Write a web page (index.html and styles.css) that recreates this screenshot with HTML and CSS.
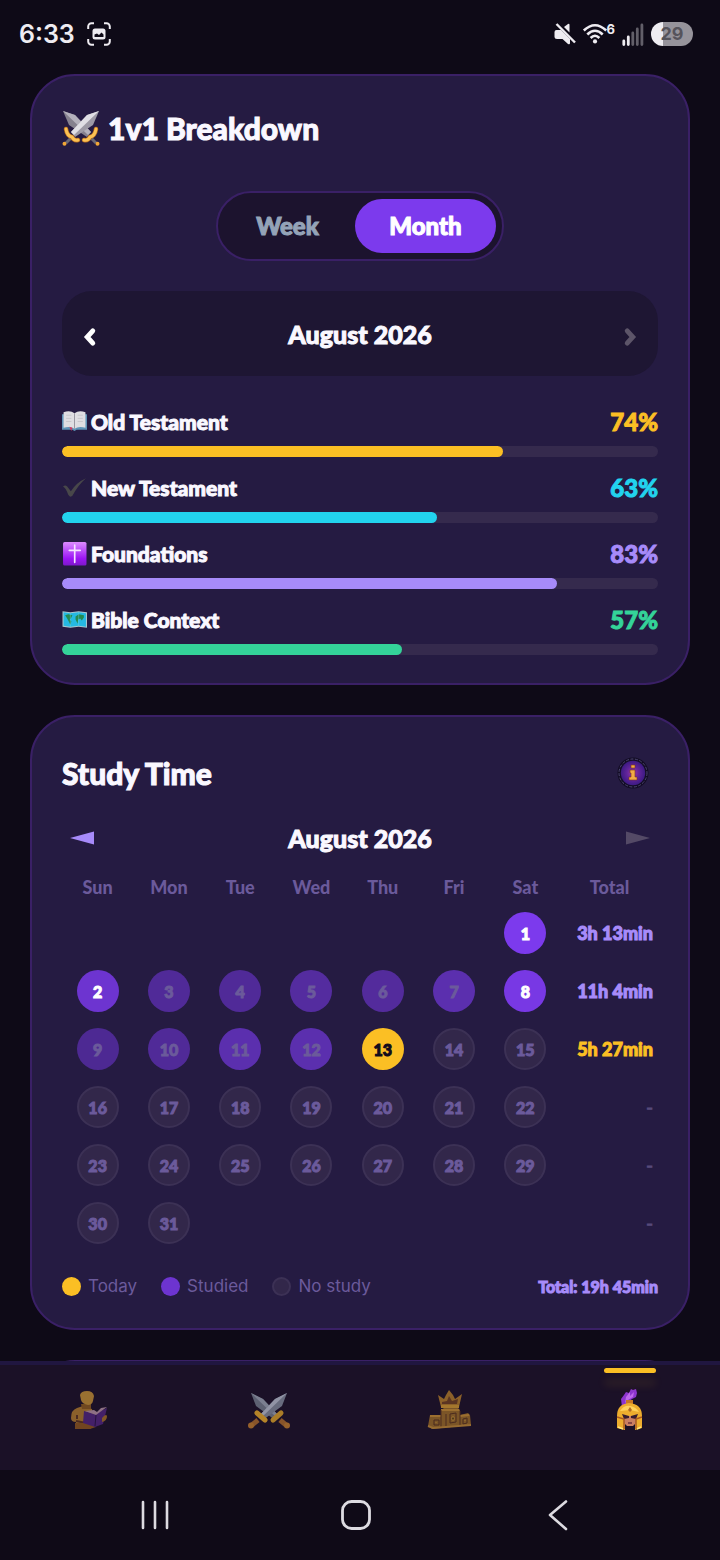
FILE: index.html
```html
<!DOCTYPE html>
<html lang="en">
<head>
<meta charset="utf-8">
<meta name="viewport" content="width=device-width, initial-scale=1">
<title>Study stats</title>
<link rel="stylesheet" href="styles.css">
</head>
<body>
<div class="app">
  <header class="status">
    <div class="status-group">
      <span class="clock">6:33</span>
      <svg class="shot-icon" viewBox="0 0 24 24" aria-hidden="true">
        <path d="M1.2 7V4.5A3.3 3.3 0 0 1 4.500 1.200H7M17 1.200H19.500A3.300 3.300 0 0 1 22.800 4.500V7M22.800 17V19.500A3.300 3.300 0 0 1 19.500 22.800H17M7 22.800H4.500A3.300 3.300 0 0 1 1.200 19.500V17" fill="none" stroke="#eeecf1" stroke-width="2"/>
        <rect x="5.500" y="6.500" width="13" height="11" rx="2.500" fill="#eeecf1"/>
        <path d="M7.500 15V12.500L10 11.500L12 13L14.500 10.500L16.500 12.500V15Z" fill="#0e0a17"/>
      </svg>
    </div>
    <div class="status-group status-right">
      <svg class="mute-icon" viewBox="0 0 22 22" aria-hidden="true">
        <path d="M.5 9Q.5 7 2.500 7H7L16 16V20Q16 22 14 21L8.500 16H3Q.5 16 .5 14Z" fill="#eeecf1"/>
        <path d="M10 4L14 1Q15.500 0 15.500 2V9.500Z" fill="#eeecf1"/>
        <path d="M2.500 1L21 19.500" stroke="#eeecf1" stroke-width="2.400"/>
      </svg>
      <span class="wifi">
        <svg class="wifi-icon" viewBox="0 0 24 20" aria-hidden="true">
          <g fill="none" stroke="#eeecf1" stroke-width="2.600"><path d="M.8 6.500Q12-4 23.200 6.500"/><path d="M4.300 10.500Q12 3 19.700 10.500"/><path d="M7.600 14Q12 9.500 16.400 14"/></g>
          <circle cx="12" cy="17.400" r="2.100" fill="#eeecf1"/>
        </svg>
        <span class="wifi-gen">6</span>
      </span>
      <svg class="signal-icon" viewBox="0 0 22 23" aria-hidden="true">
        <g stroke-width="2.800" stroke-linecap="round"><path d="M1.800 18V21.500M6.300 14V21.500" stroke="#eeecf1"/><path d="M10.800 10V21.500M15.300 6V21.500M19.900 2V21.500" stroke="#625f69"/></g>
      </svg>
      <span class="battery">29</span>
    </div>
  </header>

  <main class="content">
    <section class="card">
      <h1 class="title">
        <svg class="title-icon" viewBox="0 0 38 36" aria-hidden="true">
          <path d="M1 1L13 5L29 22L25 27L7 15Z" fill="#85818e"/><path d="M1 1L26 25L29 22L13 5Z" fill="#b4b1bc"/>
          <path d="M29 28L34 33" stroke="#6b6873" stroke-width="3"/><circle cx="35.500" cy="33.800" r="2" fill="#f1a637"/>
          <path d="M22 30Q26 31 28 27Q33 26 34 19" fill="none" stroke="#b96d1c" stroke-width="4.500" stroke-linecap="round"/><path d="M22 30Q26 31 28 27Q33 26 34 19" fill="none" stroke="#fbc154" stroke-width="3" stroke-linecap="round"/>
          <path d="M37 1L25 5L9 22L13 27L31 15Z" fill="#9d9aa6"/><path d="M37 1L12 25L9 22L25 5Z" fill="#e0dfe5"/>
          <path d="M9 28L4 33" stroke="#6b6873" stroke-width="3"/><circle cx="2.500" cy="33.800" r="2" fill="#f1a637"/>
          <path d="M16 30Q12 31 10 27Q5 26 4 19" fill="none" stroke="#b96d1c" stroke-width="4.500" stroke-linecap="round"/><path d="M16 30Q12 31 10 27Q5 26 4 19" fill="none" stroke="#fbc154" stroke-width="3" stroke-linecap="round"/>
        </svg>
        1v1 Breakdown
      </h1>

      <div class="toggle">
        <button class="toggle-item" type="button" aria-pressed="false">Week</button>
        <button class="toggle-item toggle-on" type="button" aria-pressed="true">Month</button>
      </div>

      <div class="period period-box">
        <button class="icon-button" type="button" aria-label="Previous month">
          <svg class="chevron" viewBox="0 0 12 18"><path d="M8.500 3.500L3.500 9L8.500 14.500" fill="none" stroke="#fff" stroke-width="4.400" stroke-linecap="round"/></svg>
        </button>
        <span class="period-name">August 2026</span>
        <button class="icon-button" type="button" aria-label="Next month" disabled>
          <svg class="chevron" viewBox="0 0 12 18"><path d="M3.500 3.500L8.500 9L3.500 14.500" fill="none" stroke="#5d5569" stroke-width="4.400" stroke-linecap="round"/></svg>
        </button>
      </div>

      <ul class="scores">
        <li class="score">
          <div class="score-head">
            <svg class="score-icon" viewBox="0 0 24 24" aria-hidden="true"><path d="M0 5H24V20H14L12 21L10 20H0Z" fill="#5f94b8"/><path d="M1.500 3Q8 1 12 4Q16 1 22.500 3V18Q16 16 12 19Q8 16 1.500 18Z" fill="#dfdee2"/><path d="M12 4V19" stroke="#9a98a2"/><path d="M4 6H9M4 9H9M4 12H9M15 6H20M15 9H20M15 12H20" stroke="#c4c3c9" stroke-width=".8"/><path d="M7 17L9 21L10 18Z" fill="#d43a5d"/></svg>
            <span class="score-name">Old Testament</span><span class="score-value gold">74%</span>
          </div>
          <div class="bar"><div class="fill gold" style="width:74%"></div></div>
        </li>
        <li class="score">
          <div class="score-head">
            <svg class="score-icon" viewBox="0 0 24 24" aria-hidden="true"><path d="M1 11Q3 9 5 11L8.500 15.500Q14 7 23 3Q15 10 10 20Q8 22 6 19Q4 13 1 11Z" fill="#48474a"/></svg>
            <span class="score-name">New Testament</span><span class="score-value cyan">63%</span>
          </div>
          <div class="bar"><div class="fill cyan" style="width:63%"></div></div>
        </li>
        <li class="score">
          <div class="score-head">
            <svg class="score-icon" viewBox="0 0 24 24" aria-hidden="true"><defs><linearGradient id="cross-fill" x2="0" y2="1"><stop offset="0" stop-color="#dc8cff"/><stop offset=".7" stop-color="#9c16f5"/><stop offset="1" stop-color="#7d18cc"/></linearGradient></defs><rect x="1" y="1" width="22.500" height="22.500" rx="1.500" fill="url(#cross-fill)"/><path d="M12.200 4V20.500M7 9H17.500" stroke="#f5e5ff" stroke-width="1.600" stroke-linecap="round"/></svg>
            <span class="score-name">Foundations</span><span class="score-value violet">83%</span>
          </div>
          <div class="bar"><div class="fill violet" style="width:83%"></div></div>
        </li>
        <li class="score">
          <div class="score-head">
            <svg class="score-icon" viewBox="0 0 24 24" aria-hidden="true"><path d="M.5 4L8 5L16 4L24 5V20L16 19L8 20L.5 19Z" fill="#a9c7ce"/><path d="M1.500 5L8 6L16 5L23 6V19L16 18L8 19L1.500 18Z" fill="#25b9e2"/><path d="M3 8L6 7L10 8L8.500 11L7.500 12L9 14L8 17L6.500 14L5 11ZM13 9L16 7L21 8L21 10L19 13L17.500 11L15.500 12L15 16L13 12Z" fill="#248b50"/><path d="M8 6V19M16 5V18" stroke="#78d4e7" stroke-width=".4"/></svg>
            <span class="score-name">Bible Context</span><span class="score-value green">57%</span>
          </div>
          <div class="bar"><div class="fill green" style="width:57%"></div></div>
        </li>
      </ul>
    </section>

    <section class="card">
      <div class="study-head">
        <h2 class="subtitle">Study Time</h2>
        <button class="info" type="button" aria-label="About study time">
          <svg class="info-icon" viewBox="0 0 32 32"><defs><radialGradient id="info-fill"><stop offset="0" stop-color="#a23a9f"/><stop offset=".5" stop-color="#62249b"/><stop offset="1" stop-color="#3c1a82"/></radialGradient></defs><circle cx="16" cy="16" r="15.500" fill="#130d25"/><circle cx="16" cy="16" r="14" fill="none" stroke="#4d4673" stroke-dasharray="3 1.500"/><circle cx="16" cy="16" r="12.200" fill="url(#info-fill)"/><path d="M14 8H18V11H14ZM13 13H18V20H20V23H12V20H14V16H13Z" fill="#f1ac45" stroke="#79351d" stroke-width=".6"/></svg>
        </button>
      </div>
      <div class="period period-plain">
        <button class="icon-button" type="button" aria-label="Previous month"><svg class="arrow" viewBox="0 0 24 14"><path d="M0 7L24 .5V13.500Z" fill="#a78bfa"/></svg></button>
        <span class="period-name">August 2026</span>
        <button class="icon-button" type="button" aria-label="Next month" disabled><svg class="arrow" viewBox="0 0 24 14"><path d="M24 7L0 .5V13.500Z" fill="#544a66"/></svg></button>
      </div>
      <table class="calendar">
        <thead><tr><th>Sun</th><th>Mon</th><th>Tue</th><th>Wed</th><th>Thu</th><th>Fri</th><th>Sat</th><th class="total-col">Total</th></tr></thead>
        <tbody>
          <tr><td></td><td></td><td></td><td></td><td></td><td></td><td><span class="day studied strong" style="--level:1">1</span></td><td class="sum">3h 13min</td></tr>
          <tr><td><span class="day studied strong" style="--level:.83">2</span></td><td><span class="day studied" style="--level:.5">3</span></td><td><span class="day studied" style="--level:.5">4</span></td><td><span class="day studied" style="--level:.55">5</span></td><td><span class="day studied" style="--level:.53">6</span></td><td><span class="day studied" style="--level:.63">7</span></td><td><span class="day studied strong" style="--level:.95">8</span></td><td class="sum">11h 4min</td></tr>
          <tr><td><span class="day studied" style="--level:.47">9</span></td><td><span class="day studied" style="--level:.5">10</span></td><td><span class="day studied" style="--level:.63">11</span></td><td><span class="day studied" style="--level:.63">12</span></td><td><span class="day today">13</span></td><td><span class="day">14</span></td><td><span class="day">15</span></td><td class="sum current">5h 27min</td></tr>
          <tr><td><span class="day">16</span></td><td><span class="day">17</span></td><td><span class="day">18</span></td><td><span class="day">19</span></td><td><span class="day">20</span></td><td><span class="day">21</span></td><td><span class="day">22</span></td><td class="sum none">-</td></tr>
          <tr><td><span class="day">23</span></td><td><span class="day">24</span></td><td><span class="day">25</span></td><td><span class="day">26</span></td><td><span class="day">27</span></td><td><span class="day">28</span></td><td><span class="day">29</span></td><td class="sum none">-</td></tr>
          <tr><td><span class="day">30</span></td><td><span class="day">31</span></td><td></td><td></td><td></td><td></td><td></td><td class="sum none">-</td></tr>
        </tbody>
      </table>
      <div class="legend">
        <span class="key"><i class="dot dot-today"></i>Today</span>
        <span class="key"><i class="dot dot-studied"></i>Studied</span>
        <span class="key"><i class="dot"></i>No study</span>
        <strong class="legend-total">Total: 19h 45min</strong>
      </div>
    </section>

    <section class="card card-next"></section>
  </main>

  <nav class="tabs" aria-label="Sections">
    <button class="tab" type="button" aria-label="Study">
      <svg class="tab-icon" viewBox="0 0 44 44"><path d="M3 28Q3 20 9 18L15 16L24 19L26 34H28L22 39H7L8 32Q3 32 3 28Z" fill="#8a602b"/><path d="M13 14H23V19H14Z" fill="#704820"/><path d="M12 5Q13 1 19 1Q25 1 26 6L25 11Q24 15 20 15Q14 14 13 10Z" fill="#997031"/><path d="M8 31L18 33M9 25V29" stroke="#4c2b21" stroke-width="2"/><path d="M7 33H18L28 37L22 39H7Z" fill="#714520"/><path d="M16 21L27 24L39 18L35 34L27 37L15 33Z" fill="#432068"/><path d="M17 21L26 20L29 22L33 18L39 17L28 25Z" fill="#8e7085"/><path d="M28 25L27 36" stroke="#25123e"/><path d="M34 28Q38 23 39 26Q39 31 34 32Z" fill="#825727"/></svg>
    </button>
    <button class="tab" type="button" aria-label="Battles">
      <svg class="tab-icon" viewBox="0 0 44 44"><path d="M3 3L15 9L31 26L27 30L8 16Z" fill="#5d6172"/><path d="M3 3L29 28L31 26L15 9Z" fill="#7b7f90"/><path d="M32 30L38 35" stroke="#87542a" stroke-width="5"/><path d="M25 30L33 23" stroke="#ab7d28" stroke-width="5" stroke-linecap="round"/><circle cx="39" cy="35.500" r="3" fill="#96612b"/><path d="M39 3L27 9L11 26L15 30L34 16Z" fill="#686c7e"/><path d="M39 3L13 28L11 26L27 9Z" fill="#9194a5"/><path d="M10 30L4 35" stroke="#87542a" stroke-width="5"/><path d="M17 30L9 23" stroke="#b58428" stroke-width="5" stroke-linecap="round"/><circle cx="3" cy="35.500" r="3" fill="#96612b"/></svg>
    </button>
    <button class="tab" type="button" aria-label="Leaderboard">
      <svg class="tab-icon" viewBox="0 0 44 44"><path d="M10 5L16 9L18 5L21 0L25 5L27 9L34 4L31 17H13Z" fill="#8c6129"/><path d="M14 12L19 11L21 6L24 11L30 9L29 14H14Z" fill="#5b3522"/><path d="M13 15H31V18H13Z" fill="#a4772d"/><path d="M13 20L16 18H30L32 20V25L40 23L42 25L43 35L4 39L0 36L2 25H13Z" fill="#7b5527"/><path d="M13 20H31M2 26H13M32 26L41 25" stroke="#9c6f30" stroke-width="2"/><path d="M13 20V37M32 21V36M18 24V37" fill="none" stroke="#4c2d20"/><path d="M22 24L28 23V32L22 33ZM6 30L11 30V35L6 35ZM35 29L39 28V33L35 34Z" fill="none" stroke="#4a2b1e"/><path d="M24 27H26V30H24ZM8 32V33M37 30V31" stroke="#a07432"/><path d="M0 36L5 38L43 35" fill="none" stroke="#966b31" stroke-width="2"/></svg>
    </button>
    <button class="tab tab-active" type="button" aria-label="Profile" aria-current="page">
      <svg class="tab-icon" viewBox="0 0 44 44"><path d="M14 17L13 9L16 5L18 2L21 3L23-1L25 0L28-1L29 3L28 7L24 9L20 12L19 17Z" fill="#8d35cf"/><path d="M17 13L18 7L22 2L22 6L26 2L25 7L20 10Z" fill="#bd69eb"/><path d="M18 10H25V15H18Z" fill="#c87725"/><path d="M9 26Q9 14 21 13Q34 14 34 26L34 38L27 40V28H17V40L9 38Z" fill="#edad2e"/><path d="M12 21Q16 15 22 16Q28 17 31 22L22 20Z" fill="#ffd25a"/><path d="M16 26H28V33L25 36H19L16 33Z" fill="#ca8063"/><path d="M14 24L21 26V28L16 29ZM23 26L30 24L28 29L23 28Z" fill="#381d30"/><path d="M9 27L16 29V39M34 27L28 29V39" fill="none" stroke="#a85821" stroke-width="1.500"/><path d="M10 37L15 39M29 39L33 37" stroke="#ffe47a" stroke-width="1.500"/><path d="M22 17L20 20L22 22L24 20Z" fill="#b16a23"/><path d="M20 33H24" stroke="#71323c" stroke-width="1.500"/></svg>
    </button>
  </nav>

  <div class="system">
    <button class="system-button" type="button" aria-label="Recent apps"><svg class="system-icon" viewBox="0 0 34 34"><path d="M5 4V30M17 4V30M29 4V30" stroke="#dddbe1" stroke-width="2.600" stroke-linecap="round"/></svg></button>
    <button class="system-button" type="button" aria-label="Home"><svg class="system-icon" viewBox="0 0 34 34"><rect x="3.500" y="3.500" width="27" height="27" rx="9" fill="none" stroke="#dddbe1" stroke-width="2.800"/></svg></button>
    <button class="system-button" type="button" aria-label="Back"><svg class="system-icon" viewBox="0 0 34 34"><path d="M26 3.500L10 17L26 31" fill="none" stroke="#dddbe1" stroke-width="2.600" stroke-linecap="round" stroke-linejoin="round"/></svg></button>
  </div>
</div>
</body>
</html>
```

FILE: styles.css
```css
* { box-sizing: border-box; }

:root {
  --ink: #faf8ff;
  --muted: #6b5a9b;
  --violet: #a78bfa;
  --gold: #fbbf24;
  --card: #251b42;
  --line: #3a2066;
}

body {
  margin: 0;
  background: #0e0a17;
  color: var(--ink);
  font-family: Lato, "Open Sans", sans-serif;
  font-weight: 900;
}

h1, h2, ul { margin: 0; padding: 0; }
svg { display: block; overflow: visible; }

button {
  border: 0;
  padding: 0;
  background: none;
  color: inherit;
  font: inherit;
}

.app {
  display: flex;
  flex-direction: column;
  height: 100vh;
}

/* Status bar */
.status {
  display: flex;
  flex: none;
  align-items: center;
  justify-content: space-between;
  height: 74px;
  padding: 0 27px 6px 19px;
  color: #eeecf1;
  font-family: Inter, sans-serif;
}
.status-group { display: flex; align-items: center; gap: 12px; }
.status-right { gap: 7px; }
.clock { font-size: 25px; font-weight: 600; line-height: 32px; }
.shot-icon { width: 24px; height: 24px; }
.mute-icon { width: 22px; height: 22px; }
.wifi { display: flex; align-items: flex-start; }
.wifi-icon { width: 24px; height: 20px; }
.wifi-gen { font-size: 13px; font-weight: 700; line-height: 10px; }
.signal-icon { width: 22px; height: 23px; }
.battery {
  width: 42px;
  border-radius: 12px;
  background: linear-gradient(to right, #eeecf1 29%, #96939b 29%);
  color: #56535b;
  font-size: 18px;
  font-weight: 700;
  line-height: 24px;
  text-align: center;
}

/* Cards */
.content {
  display: flex;
  flex: 1;
  flex-direction: column;
  gap: 30px;
  min-height: 0;
  padding: 0 30px;
  overflow-y: auto;
  scrollbar-width: none;
}
.card {
  flex: none;
  padding: 30px 30px 28px;
  border: 2px solid var(--line);
  border-radius: 45px;
  background: var(--card);
}
.card-next { min-height: 240px; }

/* A thin outline thickens and rounds the display text */
.title, .toggle-item, .period-name, .score-name, .score-value, .subtitle, .day, .sum, .legend-total {
  -webkit-text-stroke: 1px currentColor;
}

.title {
  display: flex;
  align-items: center;
  gap: 8px;
  font-size: 30px;
  font-weight: 900;
  line-height: 44px;
}
.title-icon { width: 38px; height: 36px; }

.toggle {
  display: flex;
  gap: 4px;
  width: fit-content;
  margin: 41px auto 30px;
  padding: 6px;
  border: 2px solid var(--line);
  border-radius: 35px;
  background: #1c132e;
}
.toggle-item {
  min-width: 127px;
  border-radius: 27px;
  color: #94a3b8;
  font-size: 24px;
  line-height: 54px;
}
.toggle-on { min-width: 141px; background: #7c3aed; color: #fff; }

.period { display: flex; align-items: center; justify-content: space-between; }
.period-box {
  height: 85px;
  padding: 0 21px;
  border-radius: 30px;
  background: #1e1633;
}
.period-box .icon-button { padding-top: 6px; }
.period-plain { height: 40px; margin: 19px 0 12px; padding: 0 8px; }
.period-name { font-size: 25px; line-height: 32px; }
.chevron { width: 14px; height: 20px; }
.arrow { width: 24px; height: 14px; }

/* Scores */
.scores { display: grid; gap: 15px; margin-top: 30px; list-style: none; }
.score { display: grid; gap: 10px; }
.score-head { display: flex; align-items: center; gap: 4px; height: 30px; }
.score-icon { width: 25px; height: 25px; }
.score-name { flex: 1; font-size: 21px; }
.score-value { font-size: 24px; }
.bar {
  height: 11px;
  overflow: hidden;
  border-radius: 6px;
  background: #352a4d;
}
.fill { height: 100%; border-radius: 6px; background: currentColor; }
.gold { color: var(--gold); }
.cyan { color: #22d3ee; }
.violet { color: var(--violet); }
.green { color: #34d399; }

/* Study time */
.study-head {
  display: flex;
  align-items: center;
  justify-content: space-between;
  height: 52px;
  padding-right: 9px;
}
.subtitle { font-size: 30px; font-weight: 900; }
.info-icon { width: 32px; height: 32px; }

.calendar { width: 100%; table-layout: fixed; border-collapse: collapse; }
.calendar th {
  height: 34px;
  padding: 0;
  color: var(--muted);
  font-size: 18px;
  font-weight: 900;
}
.calendar .total-col { width: 97px; }
.calendar td { height: 58px; padding: 0; }
.day {
  display: grid;
  place-items: center;
  width: 42px;
  height: 42px;
  margin: 0 auto;
  border: 2px solid #3c3155;
  border-radius: 50%;
  background: #32274a;
  color: var(--muted);
  font-size: 16px;
}
.studied { border: 0; background: rgb(124 58 237 / var(--level)); }
.strong { color: #fff; }
.today { border: 0; background: var(--gold); color: #120c1c; }
.calendar .sum {
  padding-right: 5px;
  color: var(--violet);
  font-size: 18px;
  text-align: right;
  white-space: nowrap;
}
.calendar .current { color: var(--gold); }
.calendar .none { color: #564a7a; font-weight: 400; }

.legend {
  display: flex;
  align-items: center;
  gap: 24px;
  margin-top: 21px;
  color: var(--muted);
  font-family: Inter, sans-serif;
  font-size: 17px;
  font-weight: 400;
  line-height: 27px;
}
.key { display: flex; align-items: center; gap: 7px; }
.dot {
  width: 19px;
  height: 19px;
  border: 2px solid #3c3155;
  border-radius: 50%;
  background: #32274a;
}
.dot-today { border: 0; background: var(--gold); }
.dot-studied { border: 0; background: #6d34d0; }
.legend-total {
  margin-left: auto;
  color: var(--violet);
  font-family: Lato, "Open Sans", sans-serif;
  font-size: 16px;
  font-weight: 900;
}

/* Tab bar */
.tabs {
  display: grid;
  flex: none;
  grid-template-columns: repeat(4, 1fr);
  height: 109px;
  border-top: 4px solid #201640;
  background: #1b1127;
}
.tab {
  position: relative;
  display: grid;
  justify-items: center;
  align-content: start;
  padding-top: 25px;
}
.tab-icon { width: 44px; height: 44px; }
.tab-active::before {
  content: "";
  position: absolute;
  top: 3px;
  left: 50%;
  width: 52px;
  height: 5px;
  border-radius: 3px;
  background: var(--gold);
  box-shadow: 0 12px 9px rgb(251 191 36 / 12%);
  transform: translateX(-50%);
}

/* System navigation */
.system {
  display: grid;
  flex: none;
  grid-template-columns: repeat(3, 1fr);
  height: 90px;
  padding: 0 62px 0 54px;
  background: #0f0a17;
}
.system-button { display: grid; place-items: center; }
.system-icon { width: 34px; height: 34px; }
```
